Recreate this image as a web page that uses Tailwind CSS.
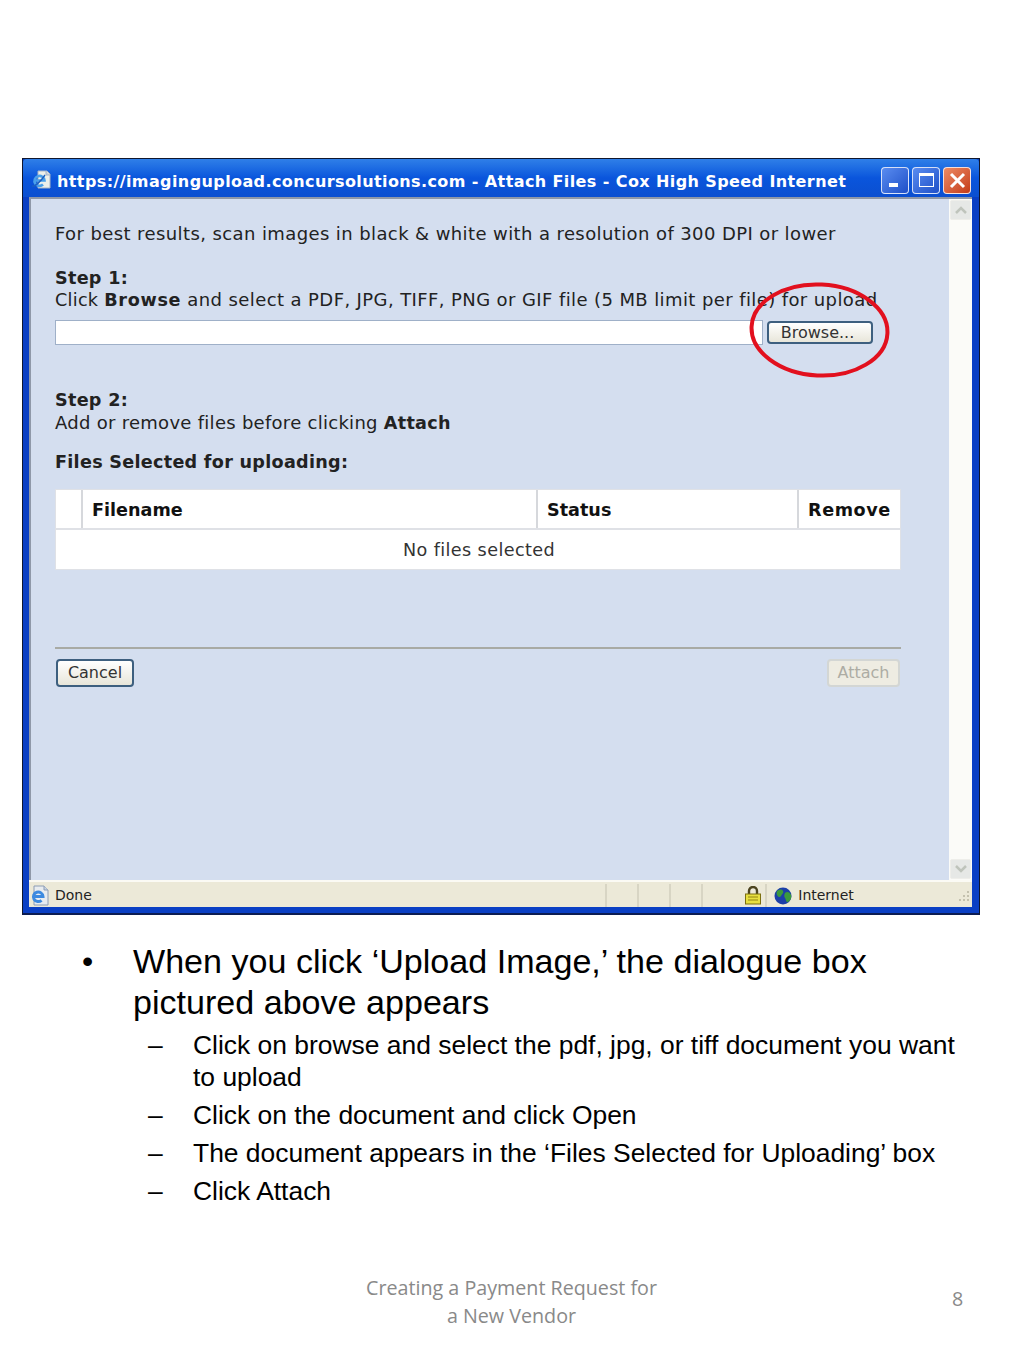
<!DOCTYPE html>
<html>
<head>
<meta charset="utf-8">
<script src="https://cdn.jsdelivr.net/npm/@tailwindcss/browser@4"></script>
</head>
<body class="bg-white">
<div class="relative w-[1024px] h-[1365px] overflow-hidden pt-[158px] font-['Liberation_Sans',sans-serif]">
  <!-- window -->
  <div class="ml-[22px] w-[958px] h-[757px] flex flex-col bg-[#0a3fc4] border-t border-x border-[#10172e] border-b-2 border-b-[#0c1c52] font-['DejaVu_Sans',sans-serif]">
    <!-- title bar -->
    <div class="h-[38px] shrink-0 flex items-center pt-[4px] pl-[8px] pr-[8px] bg-gradient-to-b from-[#2f7fe8] via-[#0a55dc] to-[#0b4fd0] rounded-t-[4px]">
      <svg class="w-[21px] h-[21px] shrink-0" viewBox="0 0 21 21"><path d="M7 1h9l3 3v14H7z" fill="#eef0ea" stroke="#a8b4c4"/><path d="M15 1v4h4" fill="#c8d0dc" stroke="#a8b4c4"/><path d="M4 10.500h9.500a5 5 0 10-1.500 4" fill="none" stroke="#4aa0ea" stroke-width="2.600"/><path d="M1 16c3 1 9-5 13-11" fill="none" stroke="#1d5fc0" stroke-width="1.400"/></svg>
      <span class="ml-[5px] mt-[3px] text-[16px] font-bold text-white whitespace-nowrap tracking-[0.4px] leading-none w-[790px]">https://imagingupload.concursolutions.com - Attach Files - Cox High Speed Internet</span>
      <div class="ml-auto flex gap-[3px]">
        <div class="w-[28px] h-[27px] rounded-[4px] border border-white/80 bg-gradient-to-br from-[#5a8cf0] to-[#1f4fc8] flex items-end pl-[7px] pb-[6px]"><div class="w-[9px] h-[4px] bg-white"></div></div>
        <div class="w-[28px] h-[27px] rounded-[4px] border border-white/80 bg-gradient-to-br from-[#5a8cf0] to-[#1f4fc8] flex items-center justify-center"><div class="w-[15px] h-[14px] border border-t-[3px] border-white"></div></div>
        <div class="w-[28px] h-[27px] rounded-[4px] border border-white/80 bg-gradient-to-br from-[#ec8a64] to-[#c43a14] flex items-center justify-center">
          <svg class="w-[17px] h-[17px]" viewBox="0 0 17 17"><path d="M2 2l13 13M15 2L2 15" stroke="#fff" stroke-width="3"/></svg>
        </div>
      </div>
    </div>
    <!-- body -->
    <div class="flex-1 min-h-0 flex ml-[6px] mr-[7px] border-l-2 border-t-2 border-[#8f98a8]">
      <div class="flex-1 min-w-0 bg-[#d4deef] pl-[24px] text-[#222] text-[17.6px] tracking-[0.28px] whitespace-nowrap">
        <div class="h-[29px] mt-[20px] leading-[29px] text-[18px] tracking-[0.4px]">For best results, scan images in black &amp; white with a resolution of 300 DPI or lower</div>
        <div class="h-[22px] mt-[19px] leading-[22px] font-bold">Step 1:</div>
        <div class="h-[22px] leading-[22px]"><span>Click </span><b class="tracking-[0.7px]">Browse</b><span class="text-[18px] tracking-[0.4px]"> and select a PDF, JPG, TIFF, PNG or GIF file (5 MB limit per file) for upload</span></div>
        <div class="flex items-center mt-[9px] h-[25px]">
          <div class="w-[708px] h-[25px] bg-white border border-[#9fb0c8]"></div>
          <div class="ml-[4px] w-[106px] h-[23px] pr-[5px] rounded-[4px] border-2 border-[#3d5f7f] bg-gradient-to-b from-white to-[#e8e6da] flex items-center justify-center text-[16px] tracking-normal leading-none text-[#333]">Browse...</div>
        </div>
        <div class="h-[22px] mt-[44px] leading-[22px] font-bold">Step 2:</div>
        <div class="h-[22px] leading-[22px] mt-[1px]"><span class="text-[18px]">Add or remove files before clicking </span><b>Attach</b></div>
        <div class="h-[22px] mt-[17px] leading-[22px] font-bold">Files Selected for uploading:</div>
        <!-- table -->
        <div class="mt-[16px] w-[846px] h-[81px] bg-white border border-[#dfe1e6] flex flex-col">
          <div class="h-[40px] flex border-b-2 border-[#dfe1e6] font-bold items-stretch tracking-normal text-[#111]">
            <div class="w-[27px] border-r-2 border-[#d6d8dc]"></div>
            <div class="w-[455px] pl-[9px] pt-[2px] flex items-center border-r-2 border-[#d6d8dc]">Filename</div>
            <div class="w-[261px] pl-[9px] pt-[2px] flex items-center border-r-2 border-[#d6d8dc]">Status</div>
            <div class="flex-1 pl-[9px] pt-[2px] flex items-center tracking-[0.6px]">Remove</div>
          </div>
          <div class="flex-1 pl-[2px] pt-[1px] flex items-center justify-center text-[#333] tracking-[0.4px]">No files selected</div>
        </div>
        <div class="mt-[77px] w-[846px] h-[2px] bg-[#a8aaa4]"></div>
        <div class="mt-[10px] w-[846px] flex justify-between pl-[1px] pr-[1px] tracking-normal">
          <div class="w-[78px] h-[28px] rounded-[4px] border-2 border-[#3d5f7f] bg-gradient-to-b from-white to-[#e8e6da] flex items-center justify-center text-[16px] leading-none text-[#333]">Cancel</div>
          <div class="w-[73px] h-[28px] rounded-[4px] border-2 border-[#d3d6d4] bg-[#eeece2] flex items-center justify-center text-[16px] leading-none text-[#adaca4]">Attach</div>
        </div>
      </div>
      <!-- scrollbar -->
      <div class="w-[23px] shrink-0 bg-[#fbfbf8] flex flex-col justify-between">
        <div class="h-[20px] m-[1px] rounded-[2px] bg-[#e6e8e6] border border-[#eeeeea] flex items-center justify-center">
          <svg class="w-[12px] h-[8px]" viewBox="0 0 12 8"><path d="M1 7l5-5 5 5" fill="none" stroke="#bfc4bc" stroke-width="2.5"/></svg>
        </div>
        <div class="h-[20px] m-[1px] rounded-[2px] bg-[#e6e8e6] border border-[#eeeeea] flex items-center justify-center">
          <svg class="w-[12px] h-[8px]" viewBox="0 0 12 8"><path d="M1 1l5 5 5-5" fill="none" stroke="#bfc4bc" stroke-width="2.5"/></svg>
        </div>
      </div>
    </div>
    <!-- status bar -->
    <div class="h-[27px] shrink-0 ml-[6px] mr-[7px] mb-[6px] pt-[2px] bg-[#ece9d8] border-t-2 border-[#fbfaf4] flex items-center text-[14px] text-[#222]">
      <svg class="w-[20px] h-[21px] ml-[1px] shrink-0" viewBox="0 0 20 21"><path d="M4 1h10l4 4v15H4z" fill="#e8ecf0" stroke="#8c9cb4"/><path d="M14 1v4h4" fill="#c8d4e4" stroke="#8c9cb4"/><path d="M4 11.500h9a4.800 4.800 0 10-1.500 3.800" fill="none" stroke="#3c8ae0" stroke-width="3"/></svg>
      <span class="ml-[5px] w-[551px]">Done</span>
      <div class="flex h-full">
        <div class="w-[32px] border-l-2 border-[#d8d5c4]"></div>
        <div class="w-[32px] border-l-2 border-[#d8d5c4]"></div>
        <div class="w-[32px] border-l-2 border-[#d8d5c4]"></div>
        <div class="w-[32px] border-l-2 border-[#d8d5c4]"></div>
      </div>
      <div class="w-[32px] h-full pl-[8px] flex items-center justify-center">
        <svg class="w-[18px] h-[19px] shrink-0" viewBox="0 0 18 19"><path d="M5 8V5a4 4 0 018 0v3" fill="none" stroke="#4c4420" stroke-width="2.400"/><rect x="1.500" y="8" width="15" height="10" fill="#e8e040" stroke="#7c7010"/><path d="M4 11h10M4 14h10" stroke="#b0a420" stroke-width="1.400"/></svg>
      </div>
      <div class="h-full border-l-2 border-[#d8d5c4] flex items-center pl-[7px] w-[190px]">
        <svg class="w-[18px] h-[18px] shrink-0" viewBox="0 0 18 18"><circle cx="9" cy="9" r="8.500" fill="#1c3fa8"/><path d="M3 4c3-2 5-2 6 0s-1 3-2 5-3 1-4-1 0-3 0-4zM11 6c2-2 5-1 6 2s-1 6-3 7-2-3-3-4-1-3 0-5z" fill="#3c9a3c"/></svg>
        <span class="ml-[6px]">Internet</span>
      </div>
      <svg class="ml-auto w-[16px] h-[16px] mr-[1px] self-end mb-[2px]" viewBox="0 0 16 16"><g fill="#c4c1ae"><rect x="12" y="2" width="2" height="2"/><rect x="8" y="6" width="2" height="2"/><rect x="12" y="6" width="2" height="2"/><rect x="4" y="10" width="2" height="2"/><rect x="8" y="10" width="2" height="2"/><rect x="12" y="10" width="2" height="2"/></g></svg>
    </div>
  </div>

  <!-- red annotation ellipse -->
  <svg class="absolute left-[745px] top-[278px] w-[150px] h-[104px]" viewBox="0 0 150 104"><ellipse cx="74.500" cy="52" rx="68" ry="45.500" fill="none" stroke="#e2101e" stroke-width="4" transform="rotate(3 74.500 52)"/></svg>

  <!-- bullets -->
  <div class="mt-[26px] text-black">
    <div class="flex">
      <span class="ml-[82px] w-[51px] text-[32px] leading-[41px]">•</span>
      <div class="w-[800px] text-[34.100px] leading-[41px]">When you click ‘Upload Image,’ the dialogue box<br>pictured above appears</div>
    </div>
    <div class="text-[26.430px] leading-[32px] mt-[6px]">
      <div class="flex"><span class="ml-[148px] w-[45px]">–</span><div class="w-[790px]">Click on browse and select the pdf, jpg, or tiff document you want<br>to upload</div></div>
      <div class="flex mt-[6px]"><span class="ml-[148px] w-[45px]">–</span><div>Click on the document and click Open</div></div>
      <div class="flex mt-[6px]"><span class="ml-[148px] w-[45px]">–</span><div>The document appears in the ‘Files Selected for Uploading’ box</div></div>
      <div class="flex mt-[6px]"><span class="ml-[148px] w-[45px]">–</span><div>Click Attach</div></div>
    </div>
  </div>

  <!-- footer -->
  <div class="flex mt-[67px] text-[#898989] font-['Open_Sans',sans-serif] text-[19.700px] leading-[28px]">
    <div class="ml-[341px] w-[341px] text-center">Creating a Payment Request for<br>a New Vendor</div>
    <div class="ml-[270px] mt-[11px]">8</div>
  </div>
</div>
</body>
</html>
